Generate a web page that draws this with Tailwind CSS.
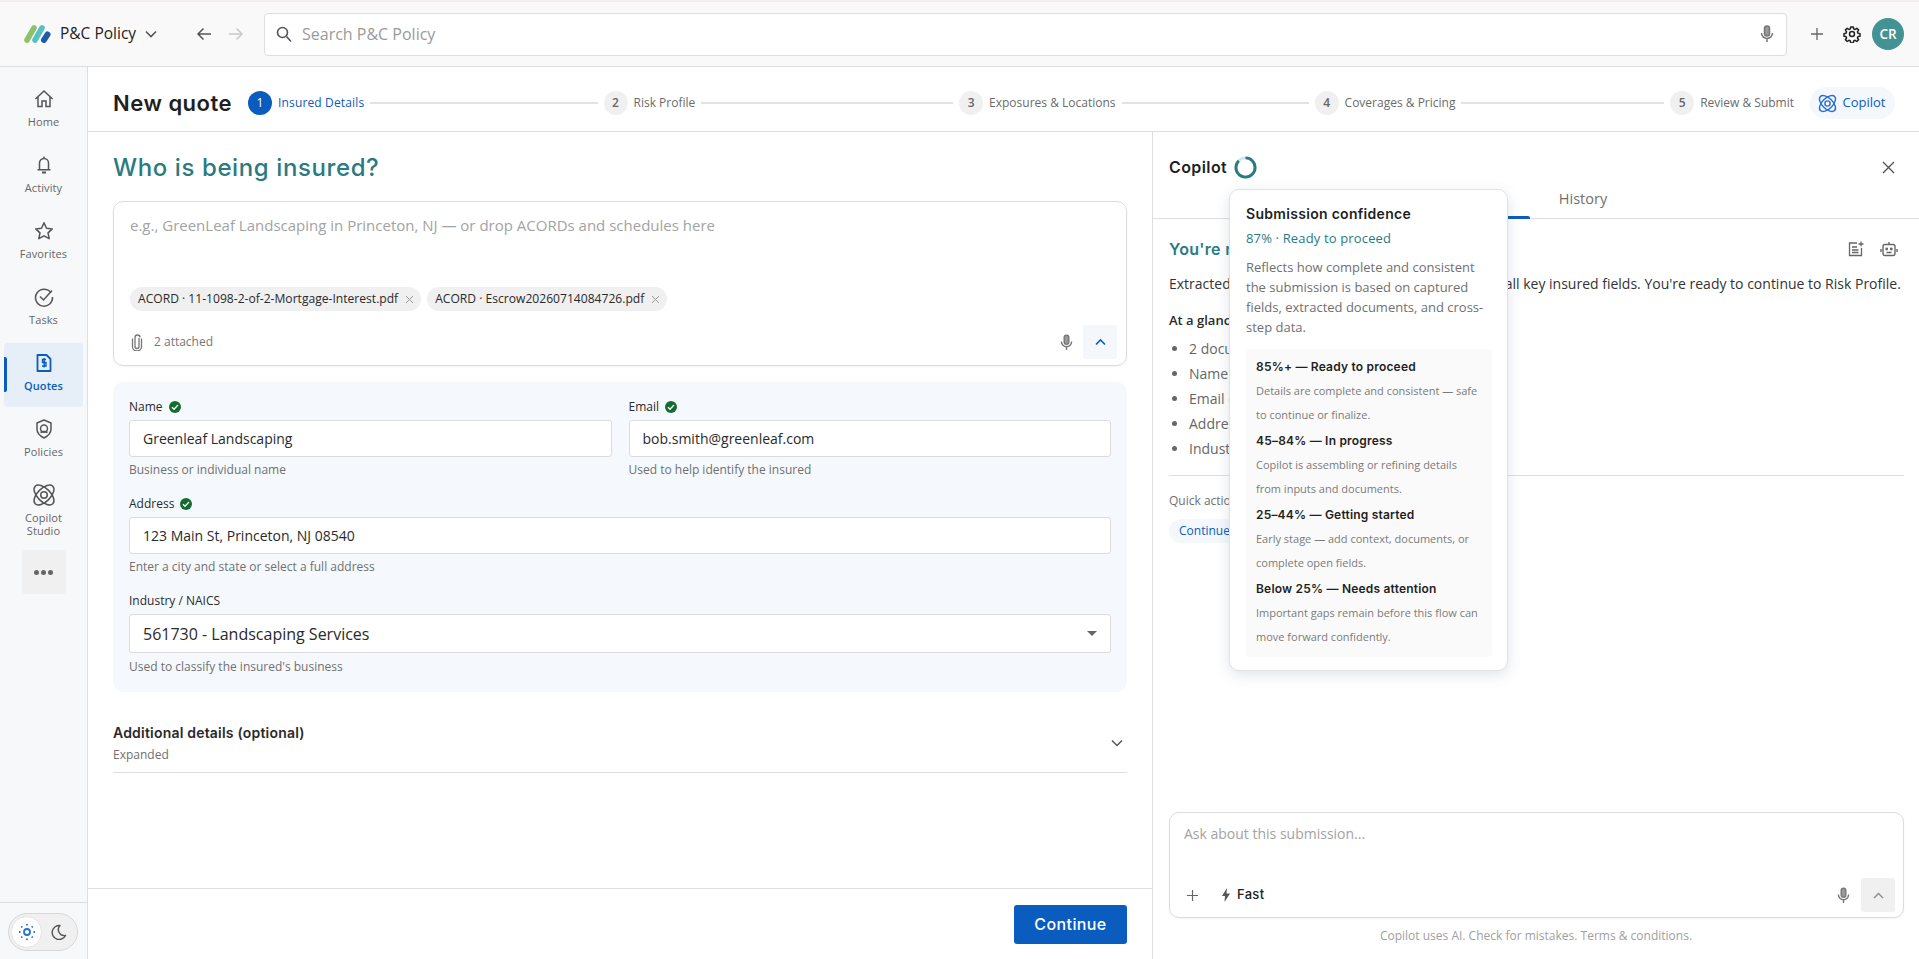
<!DOCTYPE html>
<html lang="en">
<head>
<meta charset="utf-8">
<title>P&amp;C Policy</title>
<script src="https://cdn.jsdelivr.net/npm/@tailwindcss/browser@4"></script>
</head>
<body class="font-['Open_Sans',sans-serif] text-[#1f1f1f] bg-white overflow-hidden">
<div class="h-[959px] w-[1919px] flex flex-col relative">
  <!-- top bar -->
  <header class="h-[67px] shrink-0 flex items-center bg-[#f9f9f9] border-b border-[#dedede] border-t-2 border-t-[#f3ecec]">
    <div class="w-[264px] shrink-0 flex items-center pl-[24px]">
      <svg class="w-[28px] h-[18px]" viewBox="0 0 28 18"><path d="M3 15 L10 3" stroke="#8cc26b" stroke-width="5.500" stroke-linecap="round"/><path d="M11 15 L18 3" stroke="#57c0c4" stroke-width="5.500" stroke-linecap="round"/><path d="M20 15 L23.500 9.500" stroke="#1d5aa8" stroke-width="6" stroke-linecap="round"/></svg>
      <span class="ml-[8px] text-[15.5px] font-medium text-[#222]">P&amp;C Policy</span>
      <svg class="ml-[8px] w-[14px] h-[14px]" viewBox="0 0 14 14" fill="none" stroke="#555" stroke-width="1.600"><path d="M2 4.500l5 5 5-5"/></svg>
      <svg class="ml-[38px] w-[16px] h-[16px]" viewBox="0 0 16 16" fill="none" stroke="#555" stroke-width="1.500"><path d="M15 8H2M7.500 2.500 2 8l5.500 5.500"/></svg>
      <svg class="ml-[16px] w-[16px] h-[16px]" viewBox="0 0 16 16" fill="none" stroke="#c9c9c9" stroke-width="1.500"><path d="M1 8h13M8.500 2.500 14 8l-5.500 5.500"/></svg>
    </div>
    <div class="w-[1523px] h-[43px] flex items-center bg-white border border-[#dedede] rounded-[4px] pl-[11px] pr-[12px]">
      <svg class="w-[16px] h-[17px]" viewBox="0 0 16 17" fill="none" stroke="#555" stroke-width="1.600"><circle cx="6.500" cy="6.500" r="5"/><path d="M10.500 10.500 15 15.500"/></svg>
      <span class="ml-[10px] text-[16px] text-[#9a9a9a]">Search P&amp;C Policy</span>
      <svg class="ml-auto w-[14px] h-[18px]" viewBox="0 0 14 18" fill="none" stroke="#777" stroke-width="1.500"><rect x="4.500" y="1" width="5" height="10" rx="2.500" fill="#999"/><path d="M1.500 8a5.500 5.500 0 0 0 11 0M7 13.500V17"/></svg>
    </div>
    <svg class="ml-[23px] w-[14px] h-[14px]" viewBox="0 0 14 14" stroke="#666" stroke-width="1.300"><path d="M7 1v12M1 7h12"/></svg>
    <svg class="ml-[19px] w-[18px] h-[18px]" viewBox="0 0 24 24" fill="none" stroke="#1f1f1f" stroke-width="2"><circle cx="12" cy="12" r="3.300"/><path d="M10.300 2.500h3.400l.5 2.700 1.900.8 2.300-1.600 2.400 2.400-1.600 2.300.8 1.900 2.700.5v3.400l-2.700.5-.8 1.900 1.600 2.300-2.400 2.400-2.300-1.600-1.900.8-.5 2.700h-3.400l-.5-2.700-1.900-.8-2.300 1.600-2.400-2.400 1.600-2.300-.8-1.900-2.700-.5v-3.400l2.700-.5.8-1.900-1.600-2.300 2.400-2.400 2.300 1.600 1.900-.8z" stroke-linejoin="round"/></svg>
    <div class="ml-[11px] w-[32px] h-[32px] rounded-full bg-[#439394] text-white text-[13.5px] font-semibold flex items-center justify-center">CR</div>
  </header>

  <div class="flex-1 flex min-h-0">
    <!-- sidebar -->
    <aside class="w-[88px] shrink-0 bg-[#f6f8fa] border-r border-[#dedede] flex flex-col">
      <nav class="flex-1 flex flex-col items-center gap-[2px] pt-[12px] text-[11px] tracking-[0.1px] text-[#666]">
        <a class="w-[79px] h-[64px] pb-[2px] flex flex-col items-center justify-center gap-[5px]">
          <svg class="w-[20px] h-[20px]" viewBox="0 0 20 20" fill="none" stroke="#555" stroke-width="1.500"><path d="M1.500 10 10 2l8.500 8M4 8v9.500h4V12h4v5.500h4V8"/></svg><span>Home</span></a>
        <a class="w-[79px] h-[64px] pb-[2px] flex flex-col items-center justify-center gap-[5px]">
          <svg class="w-[20px] h-[20px]" viewBox="0 0 20 20" fill="none" stroke="#555" stroke-width="1.500"><path d="M10 1.500v1.500M5.500 14.500V8a4.500 4.500 0 0 1 9 0v6.500M3.500 14.800h13"/><path d="M8 17.500h4" stroke-width="2"/></svg><span>Activity</span></a>
        <a class="w-[79px] h-[64px] pb-[2px] flex flex-col items-center justify-center gap-[5px]">
          <svg class="w-[20px] h-[20px]" viewBox="0 0 20 20" fill="none" stroke="#555" stroke-width="1.500"><path d="m10 1.800 2.500 5.400 5.800.7-4.300 4 1.200 5.800L10 14.800l-5.200 2.900L6 11.900l-4.300-4 5.800-.7z" stroke-linejoin="round"/></svg><span>Favorites</span></a>
        <a class="w-[79px] h-[64px] pb-[2px] flex flex-col items-center justify-center gap-[5px]">
          <svg class="w-[20px] h-[20px]" viewBox="0 0 20 20" fill="none" stroke="#555" stroke-width="1.500"><path d="M17 5.800A8.500 8.500 0 1 0 18.500 10"/><path d="m6 9.500 3.500 3.500L18 3.500"/></svg><span>Tasks</span></a>
        <a class="relative w-[79px] h-[64px] pb-[2px] flex flex-col items-center justify-center gap-[5px] bg-[#e6eff7] rounded-[4px] text-[#0a5cbe] font-semibold">
          <span class="absolute left-0 top-[14px] w-[3px] h-[35px] bg-[#0a5cbe] rounded-r-[2px]"></span>
          <svg class="w-[20px] h-[20px]" viewBox="0 0 20 20" fill="none" stroke="#0a5cbe" stroke-width="1.800"><path d="M3.500 2h9l4 4v12h-13z" stroke-linejoin="round"/><path d="M12 6.500H8.500v3H12v3.500H8M10.200 5v9.500" stroke-width="1.400"/></svg><span>Quotes</span></a>
        <a class="w-[79px] h-[64px] pb-[2px] flex flex-col items-center justify-center gap-[5px]">
          <svg class="w-[20px] h-[20px]" viewBox="0 0 20 20" fill="none" stroke="#555" stroke-width="1.500"><path d="M10 1 17 4v6c0 4-3 7-7 9-4-2-7-5-7-9V4z" stroke-linejoin="round"/><circle cx="10" cy="9.500" r="3.500"/><path d="M6.500 13.500c2-1 5-1 7 0"/></svg><span>Policies</span></a>
        <a class="w-[79px] h-[64px] pt-[5px] flex flex-col items-center justify-center gap-[3px] leading-[13px] text-center">
          <svg class="w-[26px] h-[26px]" viewBox="0 0 24 24" fill="none" stroke="#555" stroke-width="1.400"><ellipse cx="12" cy="12" rx="11.500" ry="6" transform="rotate(45 12 12)"/><ellipse cx="12" cy="12" rx="11.500" ry="6" transform="rotate(-45 12 12)"/><circle cx="12" cy="12" r="3"/></svg><span>Copilot<br>Studio</span></a>
        <button class="w-[44px] h-[44px] mt-[9px] rounded-[4px] bg-[#f0f0f0] flex items-center justify-center gap-[2px]">
          <span class="w-[5px] h-[5px] rounded-full bg-[#666]"></span><span class="w-[5px] h-[5px] rounded-full bg-[#666]"></span><span class="w-[5px] h-[5px] rounded-full bg-[#666]"></span>
        </button>
      </nav>
      <div class="h-[57px] border-t border-[#dedede] pt-[10px] pl-[8px]">
        <div class="w-[70px] h-[38px] rounded-full bg-[#f0f0f0] border border-[#d8d8d8] flex items-center pl-[2px]">
          <span class="w-[31px] h-[32px] rounded-full bg-white border border-[#e4e4e4] flex items-center justify-center">
            <svg class="w-[18px] h-[18px]" viewBox="0 0 18 18" fill="none" stroke="#1f72d6" stroke-width="1.800"><circle cx="9" cy="9" r="3"/><path d="M9 1v1.500M9 15.500V17M1 9h1.500M15.500 9H17M3.300 3.300l1 1M13.700 13.700l1 1M3.300 14.700l1-1M13.700 4.300l1-1"/></svg>
          </span>
          <svg class="ml-[9px] w-[16px] h-[16px]" viewBox="0 0 16 16" fill="none" stroke="#555" stroke-width="1.400"><path d="M9 1.500a7 7 0 1 0 5.500 10A6 6 0 0 1 9 1.500z" stroke-linejoin="round"/></svg>
        </div>
      </div>
    </aside>

    <main class="flex-1 flex flex-col min-w-0">
      <!-- stepper -->
      <div class="h-[65px] shrink-0 border-b border-[#dedede] flex items-center pt-[8px] pl-[25px] pr-[24px]">
        <h1 class="w-[135px] shrink-0 font-['Inter',sans-serif] text-[22px] font-semibold tracking-[0.5px] text-[#1f1f1f]">New quote</h1>
        <div class="flex-1 flex items-center gap-[6px] text-[12px] text-[#6b6b6b]">
          <div class="flex-1 flex items-center gap-[6px]">
            <span class="w-[24px] h-[24px] rounded-full bg-[#0a5cbe] text-white flex items-center justify-center">1</span>
            <span class="text-[#0a5cbe] font-medium tracking-[0.15px]">Insured Details</span>
            <span class="flex-1 h-[2px] bg-[#e2e2e2]"></span>
          </div>
          <div class="flex-1 flex items-center gap-[6px]">
            <span class="w-[24px] h-[24px] rounded-full bg-[#f0f0f0] text-[#666] font-semibold flex items-center justify-center">2</span>
            <span>Risk Profile</span>
            <span class="flex-1 h-[2px] bg-[#e2e2e2]"></span>
          </div>
          <div class="flex-1 flex items-center gap-[6px]">
            <span class="w-[24px] h-[24px] rounded-full bg-[#f0f0f0] text-[#666] font-semibold flex items-center justify-center">3</span>
            <span>Exposures &amp; Locations</span>
            <span class="flex-1 h-[2px] bg-[#e2e2e2]"></span>
          </div>
          <div class="flex-1 flex items-center gap-[6px]">
            <span class="w-[24px] h-[24px] rounded-full bg-[#f0f0f0] text-[#666] font-semibold flex items-center justify-center">4</span>
            <span>Coverages &amp; Pricing</span>
            <span class="flex-1 h-[2px] bg-[#e2e2e2]"></span>
          </div>
          <div class="flex items-center gap-[6px]">
            <span class="w-[24px] h-[24px] rounded-full bg-[#f0f0f0] text-[#666] font-semibold flex items-center justify-center">5</span>
            <span>Review &amp; Submit</span>
          </div>
        </div>
        <div class="ml-[16px] w-[85px] h-[32px] rounded-full bg-[#f4f8fd] flex items-center justify-center gap-[5px] pr-[3px] text-[13px] text-[#0a5cbe]">
          <svg class="w-[21px] h-[21px]" viewBox="0 0 24 24" fill="none" stroke="#2a6fd0" stroke-width="1.600"><ellipse cx="12" cy="12" rx="11.500" ry="6" transform="rotate(45 12 12)"/><ellipse cx="12" cy="12" rx="11.500" ry="6" transform="rotate(-45 12 12)"/><circle cx="12" cy="12" r="3"/></svg>
          Copilot
        </div>
      </div>

      <div class="flex-1 flex min-h-0">
        <!-- left -->
        <section class="w-[1065px] shrink-0 border-r border-[#dedede] flex flex-col">
          <div class="flex-1 px-[25px] pt-[19px]">
            <h2 class="h-[34px] leading-[34px] font-['Inter',sans-serif] text-[24px] font-medium tracking-[0.6px] text-[#2a7b7f]">Who is being insured?</h2>
            <div class="mt-[16px] h-[165px] border border-[#dcdcdc] rounded-[10px] px-[16px] pt-[13px] flex flex-col shadow-[0_1px_2px_rgba(0,0,0,0.05)]">
              <p class="text-[15px] leading-[20px] text-[#a3a3a3]">e.g., GreenLeaf Landscaping in Princeton, NJ — or drop ACORDs and schedules here</p>
              <div class="mt-[52px] flex gap-[6px]">
                <span class="h-[24px] rounded-full bg-[#f0f0f0] pl-[8px] pr-[7px] flex items-center gap-[7px] text-[12.1px] text-[#2a2a2a]">ACORD · 11-1098-2-of-2-Mortgage-Interest.pdf
                  <svg class="w-[9px] h-[9px]" viewBox="0 0 9 9" stroke="#999" stroke-width="1"><path d="m1 1 7 7M8 1 1 8"/></svg></span>
                <span class="h-[24px] rounded-full bg-[#f0f0f0] pl-[8px] pr-[7px] flex items-center gap-[7px] text-[12.1px] text-[#2a2a2a]">ACORD · Escrow20260714084726.pdf
                  <svg class="w-[9px] h-[9px]" viewBox="0 0 9 9" stroke="#999" stroke-width="1"><path d="m1 1 7 7M8 1 1 8"/></svg></span>
              </div>
              <div class="mt-[14px] flex items-center">
                <svg class="ml-[1px] w-[12px] h-[17px]" viewBox="0 0 12 17" fill="none" stroke="#777" stroke-width="1.300"><path d="M8 4v8.500a2 2 0 0 1-4 0V3.500a2.500 2.500 0 0 1 5 0"/><path d="M1.500 4.500v8a4.500 4.500 0 0 0 9 0v-8"/></svg>
                <span class="ml-[11px] text-[12px] text-[#777]">2 attached</span>
                <svg class="ml-auto w-[13px] h-[17px]" viewBox="0 0 14 18" fill="none" stroke="#777" stroke-width="1.500"><rect x="4.500" y="1" width="5" height="10" rx="2.500" fill="#999"/><path d="M1.500 8a5.500 5.500 0 0 0 11 0M7 13.500V17"/></svg>
                <span class="ml-[10px] w-[34px] h-[34px] mr-[-7px] rounded-[3px] bg-[#f4f8fd] flex items-center justify-center">
                  <svg class="w-[11px] h-[8px]" viewBox="0 0 11 8" fill="none" stroke="#0a5cbe" stroke-width="1.600"><path d="m1 6.500 4.500-4.500L10 6.500"/></svg>
                </span>
              </div>
            </div>
            <!-- form -->
            <div class="mt-[16px] h-[310px] rounded-[10px] bg-[#f5f9fd] px-[16px] pt-[16px]">
              <div class="grid grid-cols-2 gap-x-[17px]">
                <div>
                  <label class="h-[18px] flex items-center gap-[6px] text-[12px] text-[#2a2a2a]">Name
                    <svg class="w-[12px] h-[12px]" viewBox="0 0 12 12"><circle cx="6" cy="6" r="6" fill="#146c2e"/><path d="m3 6.200 2 2 4-4.200" fill="none" stroke="#fff" stroke-width="1.300"/></svg></label>
                  <div class="mt-[4px] h-[37px] bg-white border border-[#dcdcdc] rounded-[3px] flex items-center pl-[13px] text-[14px] text-[#2a2a2a]">Greenleaf Landscaping</div>
                  <p class="mt-[4px] h-[18px] leading-[18px] text-[12px] text-[#707070]">Business or individual name</p>
                </div>
                <div>
                  <label class="h-[18px] flex items-center gap-[6px] text-[12px] text-[#2a2a2a]">Email
                    <svg class="w-[12px] h-[12px]" viewBox="0 0 12 12"><circle cx="6" cy="6" r="6" fill="#146c2e"/><path d="m3 6.200 2 2 4-4.200" fill="none" stroke="#fff" stroke-width="1.300"/></svg></label>
                  <div class="mt-[4px] h-[37px] bg-white border border-[#dcdcdc] rounded-[3px] flex items-center pl-[13px] text-[14px] text-[#2a2a2a]">bob.smith@greenleaf.com</div>
                  <p class="mt-[4px] h-[18px] leading-[18px] text-[12px] text-[#707070]">Used to help identify the insured</p>
                </div>
              </div>
              <div class="mt-[16px]">
                <label class="h-[18px] flex items-center gap-[6px] text-[12px] text-[#2a2a2a]">Address
                  <svg class="w-[12px] h-[12px]" viewBox="0 0 12 12"><circle cx="6" cy="6" r="6" fill="#146c2e"/><path d="m3 6.200 2 2 4-4.200" fill="none" stroke="#fff" stroke-width="1.300"/></svg></label>
                <div class="mt-[4px] h-[37px] bg-white border border-[#dcdcdc] rounded-[3px] flex items-center pl-[13px] text-[14px] text-[#2a2a2a]">123 Main St, Princeton, NJ 08540</div>
                <p class="mt-[4px] h-[18px] leading-[18px] text-[12px] text-[#707070]">Enter a city and state or select a full address</p>
              </div>
              <div class="mt-[16px]">
                <label class="h-[18px] flex items-center text-[12px] text-[#2a2a2a]">Industry / NAICS</label>
                <div class="mt-[4px] h-[39px] bg-white border border-[#dcdcdc] rounded-[3px] flex items-center pl-[13px] pr-[13px] text-[16px] text-[#2a2a2a]">561730 - Landscaping Services
                  <svg class="ml-auto w-[10px] h-[5px]" viewBox="0 0 10 5" fill="#666"><path d="M0 0h10L5 5z"/></svg></div>
                <p class="mt-[5px] h-[18px] leading-[18px] text-[12px] text-[#707070]">Used to classify the insured's business</p>
              </div>
            </div>
            <!-- additional -->
            <div class="mt-[30px] h-[51px] border-b border-[#dedede] flex items-start">
              <div>
                <div class="h-[22px] leading-[22px] font-['Inter',sans-serif] text-[14px] font-semibold tracking-[0.2px] text-[#2a2a2a]">Additional details (optional)</div>
                <div class="h-[21px] leading-[21px] text-[12px] text-[#707070]">Expanded</div>
              </div>
              <svg class="ml-auto mr-[4px] mt-[17px] w-[12px] h-[8px]" viewBox="0 0 12 8" fill="none" stroke="#555" stroke-width="1.500"><path d="m1 1.500 5 5 5-5"/></svg>
            </div>
          </div>
          <div class="h-[71px] shrink-0 border-t border-[#dedede] flex items-center justify-end pr-[25px]">
            <button class="w-[113px] h-[39px] rounded-[3px] bg-[#0a5cbe] text-white text-[16px] font-medium tracking-[0.4px] font-['Inter',sans-serif]">Continue</button>
          </div>
        </section>

        <!-- copilot panel -->
        <section class="flex-1 min-w-0 flex flex-col relative">
          <div class="h-[50px] mt-[10px] pl-[16px] pr-[24px] flex items-center">
            <span class="font-['Inter',sans-serif] text-[16px] font-semibold tracking-[0.4px] text-[#1f1f1f]">Copilot</span>
            <svg class="ml-[7px] w-[23px] h-[23px] -rotate-90" viewBox="0 0 24 24" fill="none" stroke-width="3"><circle cx="12" cy="12" r="10" stroke="#d5e5e6"/><circle cx="12" cy="12" r="10" stroke="#2a7b7f" stroke-dasharray="54.700 62.830"/></svg>
            <svg class="ml-auto w-[13px] h-[13px]" viewBox="0 0 13 13" stroke="#555" stroke-width="1.400"><path d="m1 1 11 11M12 1 1 12"/></svg>
          </div>
          <div class="h-[28px] mt-[-1px] border-b border-[#dedede] relative">
            <span class="absolute left-[266px] bottom-[-1px] w-[111px] h-[3px] bg-[#0a5cbe] rounded-t-[2px]"></span>
            <span class="absolute left-[375px] top-[-2px] w-[110px] text-center text-[14.5px] leading-[20px] font-medium text-[#707070]">History</span>
          </div>
          <div class="flex-1 min-h-0 pl-[16px] pr-[15px]">
            <div class="flex items-center h-[24px] mt-[18px]">
              <h3 class="font-['Inter',sans-serif] text-[16px] font-semibold tracking-[0.3px] text-[#2a7b7f]">You're ready to continue</h3>
              <svg class="ml-auto w-[16px] h-[16px]" viewBox="0 0 16 16" fill="none" stroke="#666" stroke-width="1.300"><path d="M9 2H1.500v12.500h12V7M4 6h5M4 9h6.500M4 11.500h6.500"/><path d="M13 .5v5M10.500 3h5"/></svg>
              <svg class="ml-[16px] mr-[6px] w-[18px] h-[16px]" viewBox="0 0 18 16" fill="none" stroke="#666" stroke-width="1.400"><rect x="3" y="3.500" width="12" height="11" rx="2"/><path d="M9 3.500V1M1 8v3M17 8v3M6.500 11.500h5"/><circle cx="6.700" cy="8" r=".7" fill="#666"/><circle cx="11.300" cy="8" r=".7" fill="#666"/></svg>
            </div>
            <p class="mt-[13px] text-[14px] leading-[20px] text-[#333]">Extracted details from 2 documents, then captured all key insured fields. You're ready to continue to Risk Profile.</p>
            <p class="mt-[16px] text-[13px] leading-[20px] font-semibold text-[#2a2a2a]">At a glance</p>
            <ul class="mt-[6px] list-disc pl-[20px] text-[14px] leading-[25px] text-[#666] marker:text-[#666]">
              <li>2 documents attached</li>
              <li>Name captured</li>
              <li>Email captured</li>
              <li>Address captured</li>
              <li>Industry classified</li>
            </ul>
            <div class="mt-[14px] border-t border-[#dedede]"></div>
            <p class="mt-[16px] text-[12px] leading-[18px] text-[#707070]">Quick actions</p>
            <span class="mt-[9px] inline-flex h-[24px] rounded-full bg-[#f4f8fd] px-[10px] items-center text-[12px] text-[#0a5cbe]">Continue to Risk Profile</span>
          </div>
          <div class="h-[106px] shrink-0 ml-[16px] mr-[15px] border border-[#dcdcdc] rounded-[10px] flex flex-col pl-[14px] pr-[8px] shadow-[0_1px_2px_rgba(0,0,0,0.05)]">
            <p class="mt-[11px] h-[20px] leading-[20px] text-[14px] text-[#a3a3a3]">Ask about this submission...</p>
            <div class="mt-[34px] flex items-center">
              <svg class="ml-[2px] w-[13px] h-[13px]" viewBox="0 0 14 14" stroke="#666" stroke-width="1.300"><path d="M7 1v12M1 7h12"/></svg>
              <svg class="ml-[23px] w-[8px] h-[14px]" viewBox="0 0 8 14" fill="#555"><path d="M5 0 0 8h3L2.500 14 8 5.500H4.500z"/></svg>
              <span class="ml-[7px] font-['Inter',sans-serif] text-[13px] font-medium tracking-[0.3px] text-[#222]">Fast</span>
              <svg class="ml-auto w-[13px] h-[17px]" viewBox="0 0 14 18" fill="none" stroke="#777" stroke-width="1.500"><rect x="4.500" y="1" width="5" height="10" rx="2.500" fill="#999"/><path d="M1.500 8a5.500 5.500 0 0 0 11 0M7 13.500V17"/></svg>
              <span class="ml-[11px] w-[34px] h-[34px] rounded-[3px] bg-[#f0f0f0] flex items-center justify-center">
                <svg class="w-[11px] h-[7px]" viewBox="0 0 11 7" fill="none" stroke="#8a8a8a" stroke-width="1.400"><path d="m1 6 4.500-4.500L10 6"/></svg>
              </span>
            </div>
          </div>
          <p class="h-[41px] shrink-0 pt-[9px] text-center text-[12px] leading-[18px] text-[#a0a0a0] px-[2px]">Copilot uses AI. Check for mistakes. Terms &amp; conditions.</p>

          <!-- popover -->
          <div class="absolute left-[76px] top-[57px] w-[279px] h-[482px] bg-white border border-[#e2e2e2] rounded-[10px] shadow-[0_4px_14px_rgba(60,90,130,0.16)] pl-[16px] pr-[15px] pt-[14px]">
            <h4 class="h-[20px] leading-[20px] font-['Inter',sans-serif] text-[14px] font-semibold tracking-[0.3px] text-[#1f1f1f]">Submission confidence</h4>
            <p class="mt-[4px] h-[20px] leading-[20px] text-[13px] font-medium tracking-[0.15px] text-[#2a7b7f]">87% · Ready to proceed</p>
            <p class="mt-[9px] text-[13px] leading-[20px] text-[#707070]">Reflects how complete and consistent the submission is based on captured fields, extracted documents, and cross-step data.</p>
            <div class="mt-[12px] w-[246px] h-[308px] rounded-[4px] bg-[#fafafa] px-[10px] pt-[8px]">
              <div class="h-[74px]"><div class="h-[20px] leading-[20px] font-['Inter',sans-serif] text-[12px] font-semibold tracking-[0.2px] text-[#1f1f1f]">85%+ — Ready to proceed</div><p class="mt-[2px] text-[11px] leading-[24px] text-[#7a7a7a]">Details are complete and consistent — safe to continue or finalize.</p></div>
              <div class="h-[74px]"><div class="h-[20px] leading-[20px] font-['Inter',sans-serif] text-[12px] font-semibold tracking-[0.2px] text-[#1f1f1f]">45–84% — In progress</div><p class="mt-[2px] text-[11px] leading-[24px] text-[#7a7a7a]">Copilot is assembling or refining details from inputs and documents.</p></div>
              <div class="h-[74px]"><div class="h-[20px] leading-[20px] font-['Inter',sans-serif] text-[12px] font-semibold tracking-[0.2px] text-[#1f1f1f]">25–44% — Getting started</div><p class="mt-[2px] text-[11px] leading-[24px] text-[#7a7a7a]">Early stage — add context, documents, or complete open fields.</p></div>
              <div class="h-[74px]"><div class="h-[20px] leading-[20px] font-['Inter',sans-serif] text-[12px] font-semibold tracking-[0.2px] text-[#1f1f1f]">Below 25% — Needs attention</div><p class="mt-[2px] text-[11px] leading-[24px] text-[#7a7a7a]">Important gaps remain before this flow can move forward confidently.</p></div>
            </div>
          </div>
        </section>
      </div>
    </main>
  </div>
</div>
</body>
</html>
